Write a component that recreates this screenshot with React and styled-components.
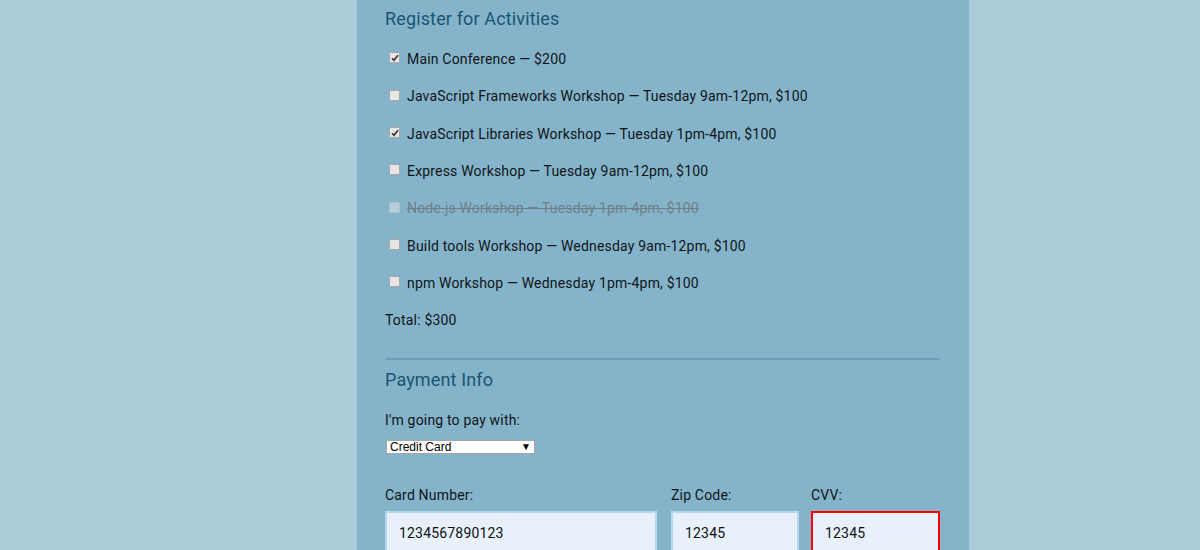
import React from "react";
import styled, { createGlobalStyle } from "styled-components";

const Global = createGlobalStyle`
  html, body { margin: 0; padding: 0; }
  body {
    background: #aacbd8;
    font-family: Roboto, "Liberation Sans", Arial, sans-serif;
    overflow: hidden;
  }
`;

const Page = styled.div`
  width: 1200px;
  height: 550px;
  overflow: hidden;
`;

const Container = styled.form`
  margin-left: 357px;
  width: 612px;
  min-height: 550px;
  background: #85b4ca;
  box-sizing: border-box;
  padding: 0 29px 0 28px;
  letter-spacing: 0.18px;
`;

const Heading = styled.h2`
  margin: 0;
  font-size: 18px;
  font-weight: 400;
  line-height: 38px;
  letter-spacing: 0.14px;
  color: #1a5474;
`;

const ActivityList = styled.div`
  margin-top: 2.33px;
  display: flex;
  flex-direction: column;
`;

const Row = styled.label`
  height: 37.33px;
  display: flex;
  align-items: center;
  font-size: 14px;
  color: ${(p) => (p.$disabled ? "#6f7f87" : "#101418")};
  text-decoration: ${(p) => (p.$disabled ? "line-through" : "none")};
`;

const Box = styled.span`
  width: 9px;
  height: 9px;
  margin: 0 7px 0 4px;
  border: 1px solid ${(p) => (p.$disabled ? "#a9c4cf" : "#a8a8a8")};
  background: ${(p) => (p.$disabled ? "#b5cfda" : "#e6e6e6")};
  border-radius: 1px;
  display: flex;
  align-items: center;
  justify-content: center;
  flex: none;
  position: relative;
  top: -1px;
`;

const Total = styled.div`
  height: 37.33px;
  display: flex;
  align-items: center;
  font-size: 14px;
  color: #101418;
`;

const Rule = styled.hr`
  margin: 19px 0 0;
  border: 0;
  height: 2px;
  background: #6a9fb6;
`;

const PaymentHeading = styled(Heading)`
  margin-top: 1px;
`;

const FieldLabel = styled.div`
  font-size: 14px;
  line-height: 20px;
  color: #101418;
  margin-top: ${(p) => p.$mt || 0}px;
`;

const Select = styled.div`
  margin-top: 10px;
  margin-left: 1px;
  width: 149px;
  height: 14px;
  box-sizing: border-box;
  background: #fff;
  border: 1px solid #a6a6a6;
  display: flex;
  align-items: center;
  justify-content: space-between;
  padding: 0 3px 0 3px;
  font-family: "Liberation Sans", Arial, sans-serif;
  font-size: 12px;
  letter-spacing: 0;
  color: #000;
`;

const Arrow = styled.span`
  font-size: 10px;
  line-height: 1;
`;

const CardRow = styled.div`
  margin-top: 31px;
  display: flex;
`;

const Field = styled.div`
  width: ${(p) => p.$w}px;
  margin-right: ${(p) => p.$mr || 0}px;
  display: flex;
  flex-direction: column;
`;

const Input = styled.div`
  margin-top: 6px;
  height: 46px;
  box-sizing: border-box;
  border: 2px solid ${(p) => (p.$error ? "#ff0000" : "#b5d8ea")};
  background: #e8f0fc;
  padding: 12px 0 0 12px;
  font-size: 14px;
  color: #111;
`;

const Check = () => (
  <svg width="8" height="8" viewBox="0 0 8 8">
    <path d="M1 4.2 L3 6.3 L7 1.2" fill="none" stroke="#333" strokeWidth="1.6" />
  </svg>
);

const activities = [
  { t: "Main Conference — $200", c: true },
  { t: "JavaScript Frameworks Workshop — Tuesday 9am-12pm, $100" },
  { t: "JavaScript Libraries Workshop — Tuesday 1pm-4pm, $100", c: true },
  { t: "Express Workshop — Tuesday 9am-12pm, $100" },
  { t: "Node.js Workshop — Tuesday 1pm-4pm, $100", d: true },
  { t: "Build tools Workshop — Wednesday 9am-12pm, $100" },
  { t: "npm Workshop — Wednesday 1pm-4pm, $100" },
];

export default function App() {
  return (
    <Page>
      <Global />
      <Container>
        <Heading>Register for Activities</Heading>
        <ActivityList>
          {activities.map((a) => (
            <Row key={a.t} $disabled={a.d}>
              <Box $disabled={a.d}>{a.c && <Check />}</Box>
              {a.t}
            </Row>
          ))}
          <Total>Total: $300</Total>
        </ActivityList>
        <Rule />
        <PaymentHeading>Payment Info</PaymentHeading>
        <FieldLabel $mt={11}>I'm going to pay with:</FieldLabel>
        <Select>
          <span>Credit Card</span>
          <Arrow>▼</Arrow>
        </Select>
        <CardRow>
          <Field $w={272} $mr={14}>
            <FieldLabel>Card Number:</FieldLabel>
            <Input>1234567890123</Input>
          </Field>
          <Field $w={128} $mr={12}>
            <FieldLabel>Zip Code:</FieldLabel>
            <Input>12345</Input>
          </Field>
          <Field $w={129}>
            <FieldLabel>CVV:</FieldLabel>
            <Input $error>12345</Input>
          </Field>
        </CardRow>
      </Container>
    </Page>
  );
}
